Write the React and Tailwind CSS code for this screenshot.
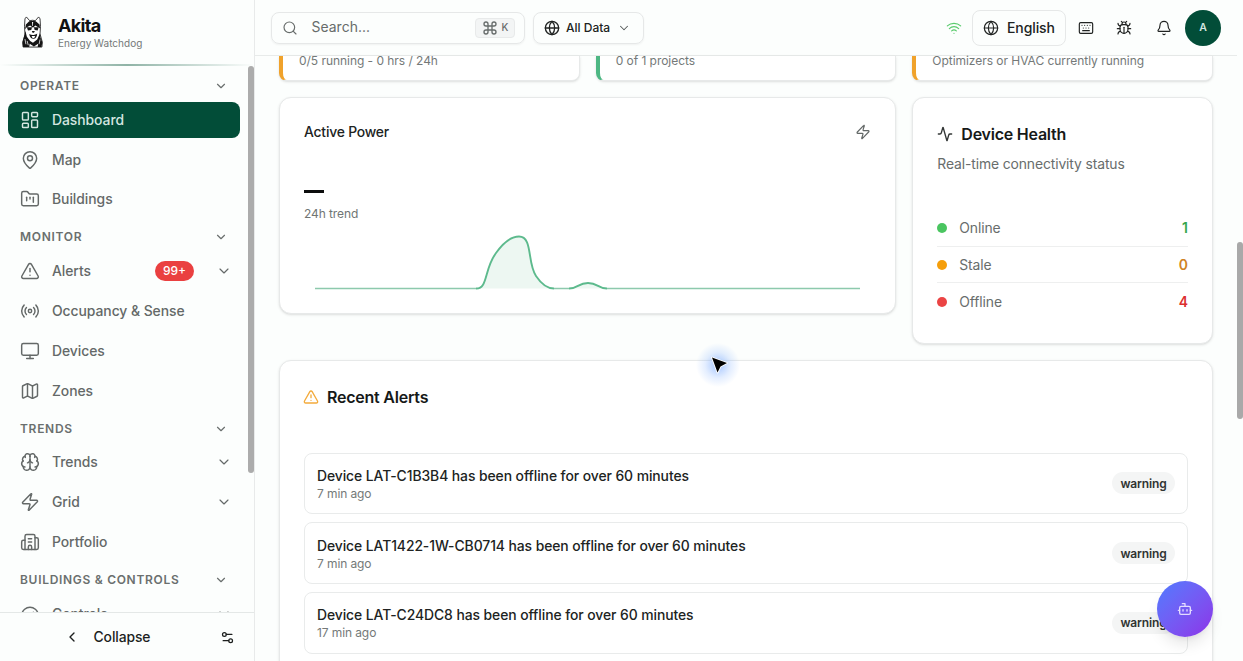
import {
  Activity, Bell, Bot, Brain, Bug, Building2, ChevronDown, ChevronLeft, Command, FolderKanban, Gauge, Globe,
  Keyboard, LayoutDashboard, Map, MapPin, Monitor, Radio, Search, Settings2, TriangleAlert, Wifi, Zap,
} from 'lucide-react';

const sections = [
  {
    title: 'OPERATE',
    items: [
      { label: 'Dashboard', icon: LayoutDashboard, active: true },
      { label: 'Map', icon: MapPin },
      { label: 'Buildings', icon: FolderKanban },
    ],
  },
  {
    title: 'MONITOR',
    items: [
      { label: 'Alerts', icon: TriangleAlert, badge: '99+', expandable: true },
      { label: 'Occupancy & Sense', icon: Radio },
      { label: 'Devices', icon: Monitor },
      { label: 'Zones', icon: Map },
    ],
  },
  {
    title: 'TRENDS',
    items: [
      { label: 'Trends', icon: Brain, expandable: true },
      { label: 'Grid', icon: Zap, expandable: true },
      { label: 'Portfolio', icon: Building2 },
    ],
  },
  {
    title: 'BUILDINGS & CONTROLS',
    items: [{ label: 'Controls', icon: Gauge, expandable: true }],
  },
];

const kpis = [
  { text: '0/5 running - 0 hrs / 24h', border: 'border-l-[#f0a22b]' },
  { text: '0 of 1 projects', border: 'border-l-[#4db783]' },
  { text: 'Optimizers or HVAC currently running', border: 'border-l-[#f0a22b]' },
];

const health = [
  { label: 'Online', value: 1, dot: 'bg-[#4ac560]', color: 'text-[#36a64d]' },
  { label: 'Stale', value: 0, dot: 'bg-[#f59e0b]', color: 'text-[#d08323]' },
  { label: 'Offline', value: 4, dot: 'bg-[#eb4444]', color: 'text-[#dc2f2f]' },
];

const alerts = [
  { title: 'Device LAT-C1B3B4 has been offline for over 60 minutes', time: '7 min ago', level: 'warning' },
  { title: 'Device LAT1422-1W-CB0714 has been offline for over 60 minutes', time: '7 min ago', level: 'warning' },
  { title: 'Device LAT-C24DC8 has been offline for over 60 minutes', time: '17 min ago', level: 'warning' },
];

function DogLogo() {
  return (
    <svg viewBox="0 0 24 34" className="h-8 w-[23px] shrink-0">
      {/* head and ears */}
      <path d="M3.5 11 4 3 5.500 1 9 5 12 4.500 15 5 18.500 1 20 3 20.500 11 20 19 22.500 28 22 33 2 33 1.500 28 4 20Z" fill="#fff" stroke="#1c1c1c" strokeWidth=".9" strokeLinejoin="round" />
      <path d="M5 9 8.500 5.500 12 5 15.500 5.500 19.500 9 20 13 18 12 15 10 12.500 12.500 9.500 10 6 12 4 14Z" fill="#151515" />
      <path d="M11.500 6.500h1.200L12.400 10.500h-.6Z" fill="#fff" />
      {/* sunglasses */}
      <path d="M6 12h5.500l-.8 3-3.500.5ZM13.500 12h5l-1 3.300-3.200-.3Z" fill="#151515" />
      {/* muzzle */}
      <path d="M11.300 16h3.200l-.9 1.800h-1.600ZM8.500 19c2.500 1.500 6 1.500 8.500-.5 0 3-1.500 5.500-4 5.800-2.500 0-4-2.300-4.500-5.300Z" fill="#151515" />
      <path d="M11 21.300h4l-1.200 2h-1.800Z" fill="#fff" />
      {/* fur */}
      <path d="M4.500 16 6 22 9.500 26.500 12.500 28.500 17 25 20 18 20.500 23 22.500 28 21.500 33 17.500 33 18 29.500 13.500 32.500 9 29.500 8.500 33 2 33 1.500 28Z" fill="#151515" />
      <path d="M4 24.500 5 30M6.300 26.500 7.500 31M20 25 19 30" stroke="#fff" strokeWidth=".8" />
    </svg>
  );
}

function NavItem({ item }) {
  const Icon = item.icon;
  return (
    <a
      className={
        item.active
          ? 'flex h-[35.8px] shrink-0 items-center rounded-lg bg-[#024d38] px-3 text-[#d5e6e0]'
          : 'flex h-[35.8px] shrink-0 items-center rounded-lg px-3 text-[#646968]'
      }
    >
      <Icon className="size-5" strokeWidth={1.75} />
      <span className="ml-3 flex-1 text-[13.9px] leading-5 font-medium tracking-[-0.05px]">{item.label}</span>
      {item.badge && (
        <span className="mr-[22px] flex h-5 w-[39px] items-center justify-center rounded-full bg-[#ea4040] text-[12px] font-medium text-white">
          {item.badge}
        </span>
      )}
      {item.expandable && <ChevronDown className="-mr-1 size-4" strokeWidth={1.75} />}
    </a>
  );
}

function Sidebar() {
  return (
    <aside className="flex h-full w-[255px] shrink-0 flex-col border-r border-[#e8eaea] bg-[#fcfefd]">
      <div className="flex h-16 shrink-0 items-center pl-[21px]">
        <DogLogo />
        <div className="ml-3.5">
          <div className="text-[18px] leading-[22px] font-bold tracking-[-0.7px] text-[#111]">Akita</div>
          <div className="text-[10px] leading-[13px] tracking-[0.03px] text-[#747978]">Energy Watchdog</div>
        </div>
      </div>
      <div className="h-[2px] shrink-0 bg-gradient-to-r from-transparent via-[#8fb3a6] to-transparent" />
      <div className="flex min-h-0 flex-1">
        <nav className="flex min-w-0 flex-1 flex-col gap-2 overflow-hidden pt-2 pl-2">
          {sections.map((s) => (
            <div key={s.title} className="flex w-[232px] shrink-0 flex-col gap-1">
              <div className="flex h-6 items-center justify-between pr-3 pl-3 text-[#6a6f6e]">
                <span className="text-[12px] font-semibold tracking-[0.7px]">{s.title}</span>
                <ChevronDown className="size-[14px]" strokeWidth={2} />
              </div>
              {s.items.map((item) => (
                <NavItem key={item.label} item={item} />
              ))}
            </div>
          ))}
        </nav>
        <div className="h-[407px] w-[6px] shrink-0 rounded-full bg-[#acacac]" />
      </div>
      <div className="flex h-[49px] shrink-0 items-center border-t border-[#e4e8e7] pr-[19px] pl-[64px] text-[#1c1f1e]">
        <ChevronLeft className="size-4" strokeWidth={2} />
        <span className="ml-[13.5px] flex-1 text-[13.9px] font-medium tracking-[-0.1px]">Collapse</span>
        <Settings2 className="size-[15px]" strokeWidth={2} />
      </div>
    </aside>
  );
}

function Header() {
  return (
    <header className="mr-[6px] flex h-14 shrink-0 items-center border-b border-[#e8ebea] pr-4 pl-4 text-[#202322]">
      <div className="flex h-8 w-[254px] items-center rounded-lg border border-[#e6e8e8] pr-[9px] pl-[10px] text-[#676c6b] shadow-xs">
        <Search className="size-4" strokeWidth={1.75} />
        <span className="ml-[13.5px] flex-1 text-[13.9px] tracking-[0.05px]">Search...</span>
        <kbd className="flex h-5 w-10 items-center justify-center gap-1 rounded border border-[#e8eaea] bg-[#f3f5f5] font-[Inter,sans-serif] text-[10px] font-medium">
          <Command className="size-4" strokeWidth={2} />K
        </kbd>
      </div>
      <div className="ml-2 flex h-8 w-[111px] items-center rounded-lg border border-[#e6e8e8] pl-[10px] shadow-xs">
        <Globe className="size-4" strokeWidth={2} />
        <span className="ml-1.5 text-[12px] font-medium">All Data</span>
        <ChevronDown className="ml-[7px] size-3.5 text-[#555a59]" strokeWidth={1.75} />
      </div>
      <div className="flex-1" />
      <Wifi className="size-4 text-[#5bcb6e]" strokeWidth={1.75} />
      <div className="ml-2.5 flex h-9 w-[94px] items-center rounded-lg border border-[#e6e8e8] pl-2.5">
        <Globe className="size-4" strokeWidth={1.75} />
        <span className="ml-2 text-[14px] font-medium tracking-[-0.1px]">English</span>
      </div>
      <Keyboard className="ml-3 size-4" strokeWidth={1.75} />
      <Bug className="ml-[22px] size-4" strokeWidth={1.75} />
      <Bell className="ml-[23.5px] size-4" strokeWidth={1.75} />
      <div className="ml-[13.5px] flex size-9 items-center justify-center rounded-full bg-[#024d38] text-[10.5px] font-semibold text-[#d5e6e0]">
        A
      </div>
    </header>
  );
}

function ActivePower() {
  return (
    <section className="flex h-[217px] flex-col rounded-xl border border-[#e7e9e9] bg-white px-6 pt-6 shadow-sm">
      <div className="flex h-5 items-center justify-between">
        <h3 className="text-[13.9px] font-medium tracking-[-0.2px] text-[#202322]">Active Power</h3>
        <Zap className="size-4 text-[#626766]" strokeWidth={1.75} />
      </div>
      {/* no reading yet */}
      <div className="mt-[34px] h-8 pt-[14px]">
        <div className="h-[3px] w-5 bg-[#0c0d0d]" />
      </div>
      <p className="mt-[-2px] text-[12px] leading-4 tracking-[-0.1px] text-[#707574]">24h trend</p>
      <svg viewBox="0 0 567 70" className="mt-[5px] h-[70px] w-[567px]">
        <path
          d="M172 61.5C184 62 182 40 193 25C201 15 208 9.5 215 9.5C229 9.5 224 36 233 50C239 59 244 61.5 250 61.5Z"
          fill="#edf7f2"
        />
        <path d="M265 61.5C274 61.5 274 56 284 56C294 56 294 61.5 303 61.5Z" fill="#edf7f2" />
        <path d="M11 61.5H172M250 61.5H265M303 61.5H556" stroke="#8dc9ad" strokeWidth="1.5" fill="none" />
        <path
          d="M172 61.5C184 62 180 42 192 26C200 15 208 9.5 215 9.5C229 9.5 223 36 232 49C238 58 244 61.5 250 61.5M265 61.5C274 61.5 274 56 284 56C294 56 294 61.5 303 61.5"
          fill="none"
          stroke="#5dba8d"
          strokeWidth="1.9"
        />
      </svg>
    </section>
  );
}

function DeviceHealth() {
  return (
    <section className="h-[247px] rounded-xl border border-[#e7e9e9] bg-white px-6 pt-6 shadow-sm">
      <div className="flex h-6 items-center gap-2">
        <Activity className="size-4 text-[#333736]" strokeWidth={2} />
        <h3 className="text-[16px] font-semibold tracking-[-0.23px] text-[#161918]">Device Health</h3>
      </div>
      <p className="mt-2 text-[13.9px] leading-5 tracking-[-0.12px] text-[#686d6c]">Real-time connectivity status</p>
      <div className="mt-9 divide-y divide-[#eeefef]">
        {health.map((h) => (
          <div key={h.label} className="flex h-[36.7px] items-center">
            <span className={`size-2.5 rounded-full ${h.dot}`} />
            <span className="ml-3 flex-1 text-[13.9px] leading-5 tracking-[-0.12px] text-[#686d6c]">{h.label}</span>
            <span className={`text-[13.9px] leading-5 font-semibold ${h.color}`}>{h.value}</span>
          </div>
        ))}
      </div>
    </section>
  );
}

function RecentAlerts() {
  return (
    <section className="mt-4 h-[400px] shrink-0 rounded-xl border border-[#e7e9e9] bg-white px-6 pt-6 shadow-sm">
      <div className="flex h-6 items-center gap-2">
        <TriangleAlert className="-ml-px size-4 text-[#f3ab3c]" strokeWidth={2} />
        <h3 className="text-[16px] font-semibold tracking-[-0.23px] text-[#161918]">Recent Alerts</h3>
      </div>
      <div className="mt-[43.5px] flex flex-col gap-2">
        {alerts.map((a) => (
          <div key={a.title} className="flex h-[61.7px] shrink-0 items-center justify-between rounded-lg border border-[#e9ebeb] px-3">
            <div className="pt-px">
              <p className="text-[13.9px] leading-5 font-medium tracking-[-0.07px] text-[#202322]">{a.title}</p>
              <p className="text-[12px] leading-4 tracking-[-0.1px] text-[#747978]">{a.time}</p>
            </div>
            <span className="flex h-[22px] w-[63px] items-center justify-center rounded-full bg-[#f4f5f5] pt-px text-[12px] font-semibold tracking-[-0.15px] text-[#303433]">
              {a.level}
            </span>
          </div>
        ))}
      </div>
    </section>
  );
}

export default function App() {
  return (
    <div className="relative flex h-[661px] w-full overflow-hidden bg-[#fcfefd] font-[Inter,sans-serif] antialiased">
      <Sidebar />
      <div className="flex min-w-0 flex-1 flex-col">
        <Header />
        <div className="flex min-h-0 flex-1 justify-between">
          <main className="ml-6 flex w-[934px] flex-col">
            <div className="grid grid-cols-3 gap-4">
              {kpis.map((k) => (
                <div
                  key={k.text}
                  className={`h-[25px] rounded-b-lg border border-t-0 border-l-4 border-[#e7e9e9] bg-white pl-4 shadow-sm ${k.border}`}
                >
                  <p className="-mt-1 text-[12px] leading-[18px] tracking-[-0.04px] text-[#747978]">{k.text}</p>
                </div>
              ))}
            </div>
            <div className="mt-4 grid grid-cols-3 items-start gap-4">
              <div className="col-span-2">
                <ActivePower />
              </div>
              <DeviceHealth />
            </div>
            <RecentAlerts />
          </main>
          <div className="mt-[186px] h-[177px] w-[6px] shrink-0 rounded-full bg-[#a9a9a9]" />
        </div>
      </div>

      {/* assistant button */}
      <button className="absolute top-[581px] left-[1157px] flex size-14 items-center justify-center rounded-full bg-gradient-to-br from-[#4b7bff] to-[#8b2fe8] text-[#e4dcff] shadow-lg">
        <Bot className="size-4" strokeWidth={2} />
      </button>

      {/* pointer with glow */}
      <div className="absolute top-[339px] left-[692px] size-[52px] bg-[radial-gradient(circle,rgba(90,150,255,0.55)_0%,rgba(120,170,255,0.2)_35%,transparent_60%)]">
        <svg viewBox="0 0 52 52" className="size-[52px]">
          <path d="M20 18.5 35 24 28.5 27.5 25.5 33.5Z" fill="#000" stroke="#fff" strokeWidth="1.8" strokeLinejoin="round" paintOrder="stroke" />
        </svg>
      </div>
    </div>
  );
}
